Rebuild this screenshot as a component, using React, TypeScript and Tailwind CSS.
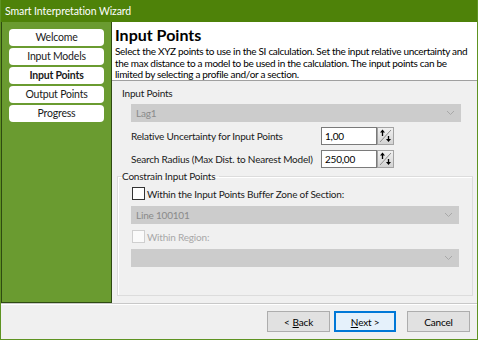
import React from "react";

const steps = ["Welcome", "Input Models", "Input Points", "Output Points", "Progress"];

function Chevron() {
  return (
    <svg width="9" height="6" viewBox="0 0 9 6" className="shrink-0">
      <path d="M1 1 L4.5 4.5 L8 1" fill="none" stroke="#a8a8a8" strokeWidth="1" />
    </svg>
  );
}

function Combo({ value }: { value?: string }) {
  return (
    <div className="flex h-[18px] items-center justify-between bg-[#cccccc] pl-[5px] pr-[6px] text-[#8a8a8a]">
      <span>{value}</span>
      <Chevron />
    </div>
  );
}

function SpinIcon() {
  return (
    <svg width="17" height="18" viewBox="0 0 17 18">
      <defs>
        <linearGradient id="spg" x1="0" y1="0" x2="0" y2="1">
          <stop offset="0" stopColor="#f2f2f2" />
          <stop offset="1" stopColor="#d2d2d2" />
        </linearGradient>
      </defs>
      <rect x="0.5" y="0.5" width="16" height="17" fill="url(#spg)" stroke="#a3a3a3" />
      <path d="M3 15 L14 3" stroke="#8c8c8c" strokeWidth="1" />
      {/* up arrow */}
      <path d="M5.5 2.5 L8 5.5 L3 5.5 Z" fill="#000" />
      <path d="M5.5 5 L5.5 9" stroke="#000" strokeWidth="1.3" />
      {/* down arrow */}
      <path d="M11.5 9 L11.5 12.5" stroke="#000" strokeWidth="1.3" />
      <path d="M9 12 L14 12 L11.5 15 Z" fill="#000" />
    </svg>
  );
}

function SpinRow({ label, value }: { label: string; value: string }) {
  return (
    <div className="flex h-[18px] items-center">
      <span className="w-[209px] shrink-0 whitespace-nowrap pl-[19px] text-[#1a1a1a]">{label}</span>
      <div className="flex">
        <div className="flex h-[18px] w-[56px] items-center border border-[#7a7a7a] bg-white pl-[3px] text-black">
          {value}
        </div>
        <SpinIcon />
      </div>
    </div>
  );
}

function Checkbox({ disabled }: { disabled?: boolean }) {
  return (
    <span
      className={
        disabled
          ? "inline-block h-[13px] w-[13px] shrink-0 border border-[#cfcfcf] bg-[#fafafa]"
          : "inline-block h-[13px] w-[13px] shrink-0 border border-[#333333] bg-white"
      }
    />
  );
}

export default function App() {
  return (
    <div className="flex h-[340px] w-[478px] flex-col overflow-hidden border-x border-b border-[#5e9322] bg-[#f0f0f0] font-['Lato',sans-serif] text-[10px] leading-none tracking-[-0.2px] text-black">
      {/* title bar */}
      <div className="-mx-px flex h-[22px] shrink-0 items-center bg-[#4e8209] pl-[5px] text-[10.5px] tracking-[-0.1px] text-white">
        Smart Interpretation Wizard
      </div>

      <div className="flex h-[281px] shrink-0">
        {/* steps */}
        <aside className="flex w-[111px] shrink-0 flex-col gap-[2px] border-x border-b border-[#2e4a12] bg-[#6a9b30] px-[7px] pt-[7px]">
          {steps.map((s) => (
            <div
              key={s}
              className={`flex h-[17px] items-center justify-center rounded-[4px] bg-white text-[10.5px] text-[#1a1a1a] ${
                s === "Input Points" ? "font-bold" : ""
              }`}
            >
              {s}
            </div>
          ))}
        </aside>

        <div className="flex flex-1 flex-col">
          {/* header */}
          <div className="h-[59px] shrink-0 border-b border-[#a0a0a0] bg-white pl-[3px] pt-[5px]">
            <div className="text-[16px] font-bold leading-[16px] tracking-normal">Input Points</div>
            <p className="mt-[3px] whitespace-nowrap leading-[11.5px] tracking-[-0.3px] text-black">
              Select the XYZ points to use in the SI calculation. Set the input relative uncertainty and
              <br />
              the max distance to a model to be used in the calculation. The input points can be
              <br />
              limited by selecting a profile and/or a section.
            </p>
          </div>

          {/* body */}
          <div className="flex flex-1 flex-col pt-[7px]">
            <div className="pl-[10px] text-[#1a1a1a]">Input Points</div>
            <div className="mt-[6px] ml-[19px] mr-[16px]">
              <Combo value="Lag1" />
            </div>
            <div className="mt-[5px] flex flex-col gap-[5px]">
              <SpinRow label="Relative Uncertainty for Input Points" value="1,00" />
              <SpinRow label="Search Radius (Max Dist. to Nearest Model)" value="250,00" />
            </div>

            <fieldset className="mt-[3px] ml-[5px] mr-[4px] h-[125px] border border-[#dcdcdc] px-[13px] shadow-[inset_1px_1px_0_#ffffff]">
              <legend className="-ml-[9px] pr-[4px] text-[#1a1a1a]">Constrain Input Points</legend>
              <label className="mt-[6px] ml-[1px] flex items-center gap-[2px] text-[#1a1a1a]">
                <Checkbox />
                <span>Within the Input Points Buffer Zone of Section:</span>
              </label>
              <div className="mt-[6px]">
                <Combo value="Line 100101" />
              </div>
              <label className="mt-[6px] ml-[1px] flex items-center gap-[2px] text-[#a8a8a8]">
                <Checkbox disabled />
                <span>Within Region:</span>
              </label>
              <div className="mt-[6px]">
                <Combo />
              </div>
            </fieldset>
          </div>
        </div>
      </div>

      {/* footer */}
      <div className="flex flex-1 items-center justify-end gap-[4px] border-t border-[#c8c8c8] pr-[7px] shadow-[inset_0_1px_0_#ffffff]">
        <button className="flex h-[21px] w-[63px] items-center justify-center border border-[#adadad] bg-[#e1e1e1]">
          &lt; <span className="ml-[3px] underline">B</span>ack
        </button>
        <button className="flex h-[21px] w-[62px] items-center justify-center border-2 border-[#0078d7] bg-[#e5f1fb]">
          <span className="underline">N</span>ext &gt;
        </button>
        <button className="ml-[7px] flex h-[21px] w-[63px] items-center justify-center border border-[#adadad] bg-[#e1e1e1]">
          Cancel
        </button>
      </div>
    </div>
  );
}
